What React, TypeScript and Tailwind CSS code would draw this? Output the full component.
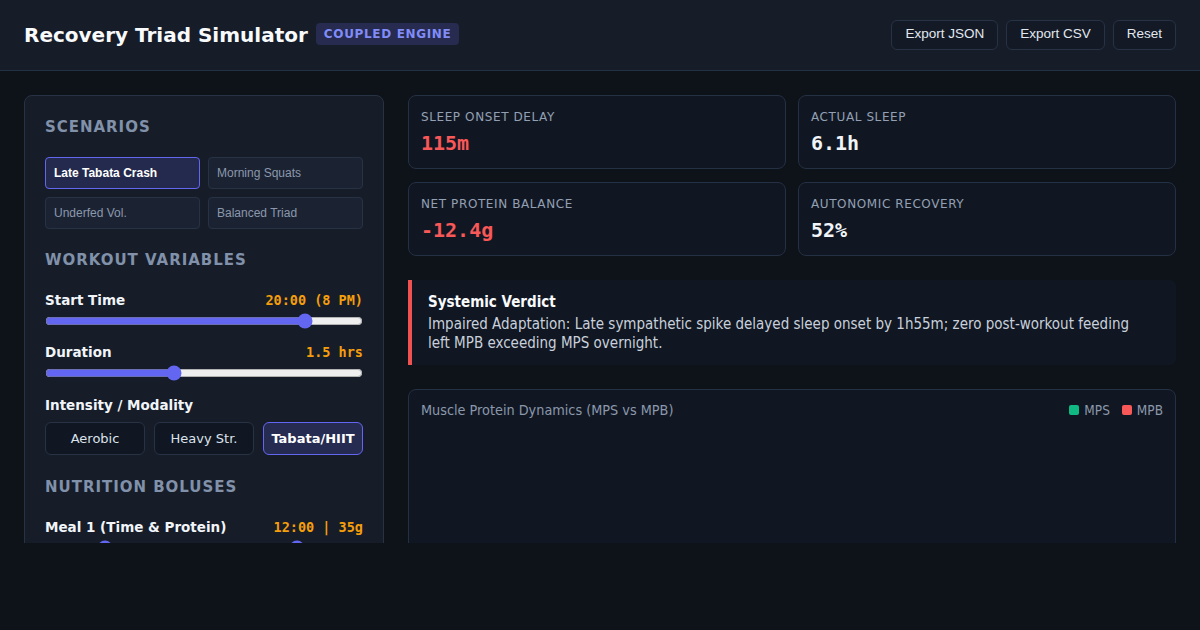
import React, { useState } from "react";

const SANS = "font-['DejaVu_Sans',sans-serif]";
const ARIAL = "font-['Liberation_Sans',Arial,sans-serif]";
const MONO = "font-['DejaVu_Sans_Mono',monospace]";
const COND = "font-['DejaVu_Sans_Condensed','DejaVu_Sans',sans-serif] font-stretch-condensed";

const scenarios = ["Late Tabata Crash", "Morning Squats", "Underfed Vol.", "Balanced Triad"];
const modalities = ["Aerobic", "Heavy Str.", "Tabata/HIIT"];

type Stat = { label: string; value: string; bad?: boolean };

const stats: Stat[] = [
  { label: "Sleep Onset Delay", value: "115m", bad: true },
  { label: "Actual Sleep", value: "6.1h" },
  { label: "Net Protein Balance", value: "-12.4g", bad: true },
  { label: "Autonomic Recovery", value: "52%" },
];

const SectionTitle = ({ children }: { children: React.ReactNode }) => (
  <h2 className="text-[15px] leading-[22px] font-bold uppercase tracking-[0.065em] text-[#8191a9] mb-5">
    {children}
  </h2>
);

const Slider = (props: {
  min: number;
  max: number;
  step?: number;
  value: number;
  onChange: (v: number) => void;
}) => (
  <input
    type="range"
    min={props.min}
    max={props.max}
    step={props.step ?? 1}
    value={props.value}
    onChange={(e) => props.onChange(Number(e.target.value))}
    className="w-full h-4 block accent-[#6366f1]"
  />
);

const ControlRow = (props: { label: string; value: string }) => (
  <div className="flex items-center justify-between leading-5">
    <span className="text-[13.5px] font-bold text-[#f1f5f9]">{props.label}</span>
    <span className={`${MONO} text-[13.5px] font-bold text-[#f59e0b]`}>{props.value}</span>
  </div>
);

export default function App() {
  const [scenario, setScenario] = useState(0);
  const [modality, setModality] = useState(2);
  const [start, setStart] = useState(20);
  const [duration, setDuration] = useState(1.5);
  const [mealTime, setMealTime] = useState(12);
  const [mealProtein, setMealProtein] = useState(35);

  const hour12 = start % 12 === 0 ? 12 : start % 12;
  const startLabel = `${String(start).padStart(2, "0")}:00 (${hour12} ${start >= 12 ? "PM" : "AM"})`;

  return (
    <div className={`${SANS} min-h-screen w-full bg-[#0e1219] text-[#e2e8f0]`}>
      <header className="h-[71px] flex items-center justify-between px-6 bg-[#161d29] border-b border-[#243044]">
        <div className="flex items-center gap-2">
          <h1 className="text-[20px] font-bold text-[#f8fafc]">Recovery Triad Simulator</h1>
          <span className="h-[22px] -mt-[2px] px-2 flex items-center rounded bg-[#262b4f] text-[12px] font-bold tracking-[0.055em] text-[#818cf8]">
            COUPLED ENGINE
          </span>
        </div>
        <div className={`${ARIAL} flex items-center gap-2`}>
          {["Export JSON", "Export CSV", "Reset"].map((b) => (
            <button
              key={b}
              className="h-[30px] -mt-[1px] px-[13px] rounded-md border border-[#283245] bg-[#131a25] text-[13.5px] text-[#e2e8f0]"
            >
              {b}
            </button>
          ))}
        </div>
      </header>

      <main className="h-[472px] overflow-hidden p-6 flex gap-6">
        {/* controls */}
        <aside className="w-[360px] shrink-0 h-[600px] rounded-lg border border-[#283245] bg-[#161d29] p-5">
          <SectionTitle>Scenarios</SectionTitle>
          <div className={`${ARIAL} -mt-[1px] grid grid-cols-2 gap-2`}>
            {scenarios.map((s, i) => (
              <button
                key={s}
                onClick={() => setScenario(i)}
                className={`h-8 px-2 text-left text-[12px] rounded border ${
                  scenario === i
                    ? "border-[#6366f1] bg-[#232a4d] text-white font-bold"
                    : "border-[#283245] bg-[#1b2333] text-[#8b98ac]"
                }`}
              >
                {s}
              </button>
            ))}
          </div>

          <div className="mt-5">
            <SectionTitle>Workout Variables</SectionTitle>
            <div className="-mt-[1px]">
              <ControlRow label="Start Time" value={startLabel} />
              <div className="mt-[3px]">
                <Slider min={0} max={24} value={start} onChange={setStart} />
              </div>
            </div>
            <div className="mt-[13px]">
              <ControlRow label="Duration" value={`${duration} hrs`} />
              <div className="mt-[3px]">
                <Slider min={0.5} max={3} step={0.25} value={duration} onChange={setDuration} />
              </div>
            </div>
            <div className="mt-[14px]">
              <div className="text-[13.5px] leading-5 font-bold text-[#f1f5f9]">Intensity / Modality</div>
              <div className="mt-[7px] grid grid-cols-3 gap-[9px]">
                {modalities.map((m, i) => (
                  <button
                    key={m}
                    onClick={() => setModality(i)}
                    className={`h-[33px] rounded-md border text-[13px] ${
                      modality === i
                        ? "border-[#6366f1] bg-[#262b52] text-white font-bold"
                        : "border-[#283245] bg-[#111722] text-[#dbe2ec]"
                    }`}
                  >
                    {m}
                  </button>
                ))}
              </div>
            </div>
          </div>

          <div className="mt-[21px]">
            <SectionTitle>Nutrition Boluses</SectionTitle>
            <div className="-mt-[1px]">
              <ControlRow
                label="Meal 1 (Time & Protein)"
                value={`${String(mealTime).padStart(2, "0")}:00 | ${mealProtein}g`}
              />
              <div className="mt-[3px] grid grid-cols-2 gap-2">
                <Slider min={6} max={22} value={mealTime} onChange={setMealTime} />
                <Slider min={0} max={60} value={mealProtein} onChange={setMealProtein} />
              </div>
            </div>
          </div>
        </aside>

        {/* results */}
        <section className="flex-1 min-w-0 flex flex-col gap-6">
          <div className="grid grid-cols-2 gap-x-3 gap-y-[13px]">
            {stats.map((s) => (
              <div key={s.label} className="h-[74px] rounded-lg border border-[#243044] bg-[#111722] px-3 pt-[13px]">
                <div className="text-[12px] leading-4 uppercase tracking-[0.05em] text-[#93a0b4]">{s.label}</div>
                <div
                  className={`${MONO} mt-[4px] text-[20px] leading-7 font-bold ${
                    s.bad ? "text-[#f85858]" : "text-[#f1f5f9]"
                  }`}
                >
                  {s.value}
                </div>
              </div>
            ))}
          </div>

          <div className={`${COND} rounded-r-md border-l-4 border-[#f05252] bg-[#111722] pt-3 pb-3 pl-4 pr-8`}>
            <div className="text-[15px] leading-5 font-bold text-[#f8fafc]">Systemic Verdict</div>
            <p className="mt-[3px] text-[15px] leading-[19px] text-[#c8d0dc]">
              Impaired Adaptation: Late sympathetic spike delayed sleep onset by 1h55m; zero post-workout feeding
              left MPB exceeding MPS overnight.
            </p>
          </div>

          <div className="h-[320px] shrink-0 rounded-lg border border-[#243044] bg-[#111722] p-3">
            <div className={`${COND} flex items-center justify-between text-[14.3px] leading-4 text-[#8b98ac]`}>
              <span>Muscle Protein Dynamics (MPS vs MPB)</span>
              <div className="flex items-center gap-[12px] text-[13.5px]">
                <span className="flex items-center gap-[5px]">
                  <span className="w-[10px] h-[10px] rounded-[2px] bg-[#10b981]" />
                  MPS
                </span>
                <span className="flex items-center gap-[5px]">
                  <span className="w-[10px] h-[10px] rounded-[2px] bg-[#f85858]" />
                  MPB
                </span>
              </div>
            </div>
          </div>
        </section>
      </main>
    </div>
  );
}
